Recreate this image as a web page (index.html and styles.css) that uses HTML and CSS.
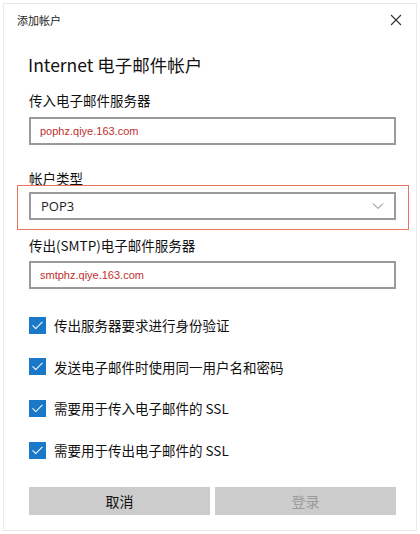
FILE: index.html
```html
<!doctype html>
<html>
  <head>
    <meta charset="utf-8">
    <title>添加帐户</title>
    <link rel="stylesheet" href="styles.css">
  </head>
  <body>
    <div class="dialog">
      <div class="titlebar">
        <span class="title">添加帐户</span>
        <svg class="close" width="12" height="12" viewBox="0 0 12 12">
          <path d="M1 1L11 11M11 1L1 11" stroke="#333" stroke-width="1.1" fill="none"/>
        </svg>
      </div>
      <div class="content">
        <h1>Internet 电子邮件帐户</h1>

        <label class="field-label">传入电子邮件服务器</label>
        <div class="input">pophz.qiye.163.com</div>

        <label class="field-label type-label">帐户类型</label>
        <div class="select-wrap">
          <div class="select">
            <span>POP3</span>
            <svg width="12" height="8" viewBox="0 0 12 8">
              <path d="M1 1.5L6 6.5L11 1.5" stroke="#777" stroke-width="1" fill="none"/>
            </svg>
          </div>
        </div>

        <label class="field-label smtp-label">传出(SMTP)电子邮件服务器</label>
        <div class="input">smtphz.qiye.163.com</div>

        <div class="checks">
          <div class="check"><span class="box"></span>传出服务器要求进行身份验证</div>
          <div class="check"><span class="box"></span>发送电子邮件时使用同一用户名和密码</div>
          <div class="check"><span class="box"></span>需要用于传入电子邮件的 SSL</div>
          <div class="check"><span class="box"></span>需要用于传出电子邮件的 SSL</div>
        </div>

        <div class="buttons">
          <button class="btn">取消</button>
          <button class="btn disabled">登录</button>
        </div>
      </div>
    </div>
  </body>
</html>
```

FILE: styles.css
```css
* {
  box-sizing: border-box;
}
body {
  margin: 0;
  background: #fff;
  font-family: "Noto Sans CJK SC", "Noto Sans", sans-serif;
  color: #000;
}
.dialog {
  margin: 3px;
  height: 528px;
  border: 1px solid #e6eaef;
  background: #fff;
}
.titlebar {
  display: flex;
  justify-content: space-between;
  align-items: center;
  padding: 8px 13px 0 13px;
  height: 24px;
}
.title {
  font-size: 11px;
  line-height: 16px;
  color: #222;
}
.close {
  margin-right: 1px;
}
.content {
  display: flex;
  flex-direction: column;
  padding: 0 20px 0 25px;
}
h1 {
  margin: 24px 0 0 -1px;
  font-size: 17.5px;
  line-height: 26px;
  font-weight: 400;
  color: #111;
}
.field-label {
  display: block;
  margin-top: 12px;
  font-size: 13.5px;
  line-height: 20px;
  color: #111;
}
.input {
  margin-top: 7px;
  height: 28px;
  border: 2px solid #9a9a9a;
  padding: 0 0 0 9px;
  font-family: "Liberation Sans", Arial, sans-serif;
  font-size: 11px;
  line-height: 24px;
  color: #c0302e;
}
.type-label {
  margin-top: 23px;
}
.select-wrap {
  position: relative;
  margin-top: 4px;
}
.select-wrap::after {
  content: "";
  position: absolute;
  left: -12px;
  right: -13px;
  top: -7px;
  bottom: -10px;
  border: 1px solid #e8735f;
}
.select {
  display: flex;
  justify-content: space-between;
  align-items: center;
  height: 28px;
  border: 2px solid #9a9a9a;
  padding: 0 10px 0 10px;
  font-family: "Open Sans", "Noto Sans", sans-serif;
  font-size: 13px;
  color: #222;
}
.smtp-label {
  margin-top: 15px;
}
.smtp-label + .input {
  margin-top: 6px;
}
.checks {
  display: flex;
  flex-direction: column;
  gap: 21.7px;
  margin-top: 26px;
}
.check {
  display: flex;
  align-items: center;
  height: 20px;
  font-size: 13.5px;
  color: #111;
}
.box {
  position: relative;
  width: 17px;
  height: 17px;
  margin-right: 8px;
  background: #1a78c9;
}
.box::after {
  content: "";
  position: absolute;
  left: 6px;
  top: 2px;
  width: 4px;
  height: 9px;
  border: solid #fff;
  border-width: 0 1.5px 1.5px 0;
  transform: rotate(45deg);
}
.buttons {
  display: flex;
  gap: 5px;
  margin-top: 27px;
}
.btn {
  flex: 1;
  height: 28px;
  border: 0;
  background: #cccccc;
  font-family: "Noto Sans CJK SC", sans-serif;
  font-size: 14px;
  color: #111;
  padding: 0;
}
.btn.disabled {
  color: #9a9a9a;
}
```
